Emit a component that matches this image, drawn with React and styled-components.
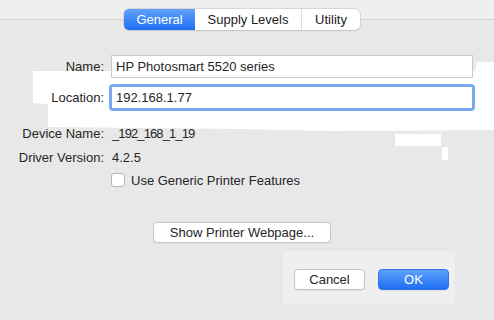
import styled, { createGlobalStyle, css } from "styled-components";

const GlobalStyle = createGlobalStyle`
  html, body {
    margin: 0;
    padding: 0;
    background: #e8e8e8;
  }
  body {
    font-family: "Liberation Sans", Arial, sans-serif;
    font-size: 13px;
    color: #262626;
  }
`;

const tabs = [
  { id: "general", text: "General", width: 71, active: true },
  { id: "supply", text: "Supply Levels", width: 106, active: false },
  { id: "utility", text: "Utility", width: 59, active: false },
];

function App() {
  return (
    <>
      <GlobalStyle />
      <Window>
        {/* redaction blotch behind the location row */}
        <Redaction />
        <RedactionBit $x={395} $y={134} $w={46} $h={12} />
        <RedactionBit $x={442} $y={147} $w={6} $h={13} />

        <Content>
          <TabBar>
            <Segmented>
              {tabs.map((t) => (
                <Segment key={t.id} $active={t.active} $width={t.width}>
                  {t.text}
                </Segment>
              ))}
            </Segmented>
          </TabBar>

          <Form>
            <Label>Name:</Label>
            <Field>HP Photosmart 5520 series</Field>
            <Label>Location:</Label>
            <Field $focused>192.168.1.77</Field>
            <Spacer />
            <Label>Device Name:</Label>
            <Value $condensed>_192_168_1_19</Value>
            <Label>Driver Version:</Label>
            <Value>4.2.5</Value>
            <span />
            <CheckRow>
              <Checkbox />
              Use Generic Printer Features
            </CheckRow>
          </Form>

          <WebRow>
            <Button $width={178}>Show Printer Webpage...</Button>
          </WebRow>

          <Footer>
            <FooterPanel>
              <Button $width={71}>Cancel</Button>
              <Button $width={71} $primary>
                OK
              </Button>
            </FooterPanel>
          </Footer>
        </Content>
      </Window>
    </>
  );
}

const Window = styled.div`
  position: relative;
  width: 494px;
  height: 320px;
  overflow: hidden;
  background: linear-gradient(
    #efefef 0,
    #efefef 19px,
    #d3d3d3 19px,
    #d3d3d3 20px,
    #e8e8e8 20px
  );
`;

const Content = styled.div`
  position: relative;
  z-index: 1;
`;

const TabBar = styled.div`
  display: flex;
  padding: 9px 0 0 124px;
`;

const Segmented = styled.div`
  display: flex;
  height: 21px;
  border-radius: 5px;
  background: #fff;
  box-shadow: 0 0 0 0.5px #bdbdbd, 0 1px 1px rgba(0, 0, 0, 0.12);
  overflow: hidden;
`;

const Segment = styled.div`
  display: flex;
  align-items: center;
  justify-content: center;
  width: ${({ $width }) => $width}px;
  box-sizing: border-box;
  color: #222;
  border-left: 1px solid #dcdcdc;

  &:first-child {
    border-left: none;
  }

  ${({ $active }) =>
    $active &&
    css`
      background: linear-gradient(#63a2fb, #1d6ff2);
      color: #fff;
      border-left: none;
      & + div {
        border-left: none;
      }
    `}
`;

const Form = styled.div`
  display: grid;
  grid-template-columns: 104px 362px;
  grid-template-rows: 30px 32px 8px 24px 24px 22px;
  column-gap: 7px;
  align-items: center;
  margin-top: 21px;
`;

const Label = styled.div`
  text-align: right;
`;

const Spacer = styled.div`
  grid-column: 1 / -1;
`;

const Field = styled.div`
  height: 21px;
  line-height: 21px;
  padding: 0 4px;
  background: #fff;
  border: 1px solid #c9c9c9;
  ${({ $focused }) =>
    $focused &&
    css`
      border-color: #7aa7e6;
      box-shadow: 0 0 0 2px #79a8ec;
      border-radius: 2px;
    `}
`;

const Value = styled.div`
  padding-left: 1px;
  letter-spacing: ${({ $condensed }) => ($condensed ? "-0.9px" : "0")};
`;

const CheckRow = styled.label`
  display: flex;
  align-items: center;
  gap: 6px;
`;

const Checkbox = styled.span`
  width: 12px;
  height: 12px;
  border-radius: 3px;
  background: #fff;
  border: 1px solid #b5b5b5;
`;

const WebRow = styled.div`
  display: flex;
  padding: 31px 0 0 153px;
`;

const Button = styled.div`
  display: flex;
  align-items: center;
  justify-content: center;
  width: ${({ $width }) => $width}px;
  height: 21px;
  border-radius: 4px;
  background: #fff;
  border: 1px solid #c4c4c4;
  box-shadow: 0 1px 0 rgba(0, 0, 0, 0.05);
  box-sizing: border-box;

  ${({ $primary }) =>
    $primary &&
    css`
      background: linear-gradient(#5fa0fb, #1e6ff1);
      border-color: #2a75ee;
      color: #fff;
    `}
`;

const Footer = styled.div`
  display: flex;
  padding: 8px 0 0 283px;
`;

const FooterPanel = styled.div`
  display: flex;
  gap: 13px;
  width: 172px;
  height: 53px;
  box-sizing: border-box;
  padding: 18px 0 0 11px;
  background: #efefef;
`;

const Redaction = styled.div`
  position: absolute;
  inset: 0;
  background: #fff;
  clip-path: polygon(
    33px 71px,
    475px 71px,
    477px 62px,
    494px 62px,
    494px 130px,
    330px 131px,
    240px 129px,
    48px 127px,
    48px 104px,
    33px 103px
  );
`;

const RedactionBit = styled.div`
  position: absolute;
  left: ${({ $x }) => $x}px;
  top: ${({ $y }) => $y}px;
  width: ${({ $w }) => $w}px;
  height: ${({ $h }) => $h}px;
  background: #fff;
`;

export default App;
